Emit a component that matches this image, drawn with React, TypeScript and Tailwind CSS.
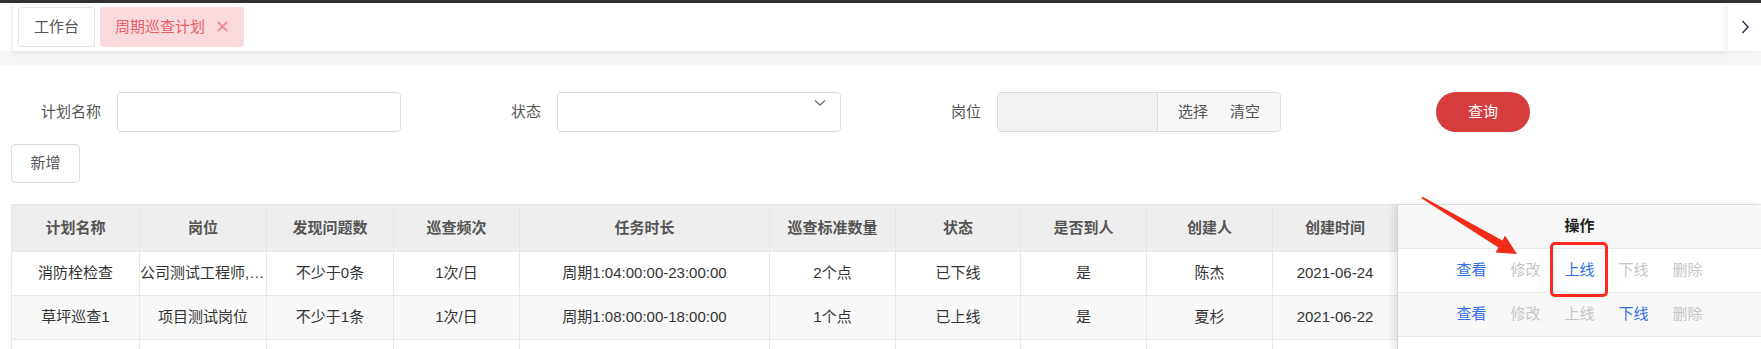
import React from 'react'

const columns = [
  { title: '计划名称', w: 'w-[128px]' },
  { title: '岗位', w: 'w-[127px]' },
  { title: '发现问题数', w: 'w-[127px]' },
  { title: '巡查频次', w: 'w-[126px]' },
  { title: '任务时长', w: 'w-[250px]' },
  { title: '巡查标准数量', w: 'w-[126px]' },
  { title: '状态', w: 'w-[125px]' },
  { title: '是否到人', w: 'w-[126px]' },
  { title: '创建人', w: 'w-[126px]' },
  { title: '创建时间', w: 'w-[125px]' },
]

const rows = [
  ['消防栓检查', '公司测试工程师,项目测试岗位', '不少于0条', '1次/日', '周期1:04:00:00-23:00:00', '2个点', '已下线', '是', '陈杰', '2021-06-24'],
  ['草坪巡查1', '项目测试岗位', '不少于1条', '1次/日', '周期1:08:00:00-18:00:00', '1个点', '已上线', '是', '夏杉', '2021-06-22'],
  ['', '', '', '', '', '', '', '', '', ''],
]

// which action links are enabled, per row
const actions = [
  [true, false, true, false, false],
  [true, false, false, true, false],
]
const actionNames = ['查看', '修改', '上线', '下线', '删除']

const rowBg = ['bg-white', 'bg-[#f8f8f8]', 'bg-white']

export default function App() {
  return (
    <div className="relative w-[1761px] h-[349px] overflow-hidden bg-white font-['Liberation_Sans','Noto_Sans_CJK_SC',sans-serif] text-[15px]">
      {/* top strip */}
      <div className="h-[3px] bg-[#333333]" />

      {/* tab bar */}
      <div className="flex h-[48px] bg-white">
        <div className="w-[13px] bg-white" />
        <div className="flex flex-1 items-center gap-[5px] pl-[5px] shadow-[0_2px_6px_rgba(0,0,0,0.07),-2px_0_4px_rgba(0,0,0,0.04)]">
          <div className="flex h-[40px] w-[77px] items-center justify-center rounded-[3px] border border-[#e4e4e4] bg-white text-[#555]">
            工作台
          </div>
          <div className="flex h-[40px] w-[144px] items-center gap-[10px] rounded-[3px] bg-[#fbdadd] pl-[15px] text-[#e85f68]">
            <span>周期巡查计划</span>
            <span className="text-[18px] leading-none text-[#ef8e94]">✕</span>
          </div>
        </div>
        <div className="flex w-[33px] items-center justify-center bg-white shadow-[-3px_0_6px_rgba(0,0,0,0.06)]">
          <svg width="10" height="16" viewBox="0 0 10 16" fill="none">
            <path d="M2.5 2l5.5 6-5.5 6" stroke="#2f3a4c" strokeWidth="1.5" />
          </svg>
        </div>
      </div>

      {/* gray band */}
      <div className="h-[14px] bg-[#f5f6f8]" />

      {/* filter row */}
      <div className="flex pt-[27px]">
        <div className="flex w-[440px] items-center">
          <label className="w-[117px] pr-[16px] text-right text-[#555]">计划名称</label>
          <div className="h-[40px] w-[284px] rounded-[4px] border border-[#dcdcdc] bg-white" />
        </div>
        <div className="flex w-[440px] items-center">
          <label className="w-[117px] pr-[16px] text-right text-[#555]">状态</label>
          <div className="relative h-[40px] w-[284px] rounded-[4px] border border-[#dcdcdc] bg-white">
            <svg className="absolute right-[14px] top-[6px]" width="12" height="8" viewBox="0 0 12 8" fill="none">
              <path d="M1 1.5l5 4.5 5-4.5" stroke="#777" strokeWidth="1.4" />
            </svg>
          </div>
        </div>
        <div className="flex w-[440px] items-center">
          <label className="w-[117px] pr-[16px] text-right text-[#555]">岗位</label>
          <div className="flex h-[40px] w-[284px] overflow-hidden rounded-[4px] border border-[#dcdcdc]">
            <div className="w-[160px] border-r border-[#dcdcdc] bg-[#f2f2f2]" />
            <div className="flex flex-1 items-center justify-center gap-[22px] bg-[#f7f7f7] text-[#555]">
              <span>选择</span>
              <span>清空</span>
            </div>
          </div>
        </div>
        <div className="flex items-center pl-[116px]">
          <button className="h-[40px] w-[94px] rounded-full bg-[#d63b3d] text-white">查询</button>
        </div>
      </div>

      {/* add button */}
      <div className="pl-[11px] pt-[12px]">
        <button className="h-[39px] w-[69px] rounded-[4px] border border-[#dcdcdc] bg-white text-[#555]">新增</button>
      </div>

      {/* table */}
      <div className="ml-[11px] mt-[21px] flex border-t border-[#e5e5e5]">
        <div className="border-l border-[#e8e8e8]">
          <div className="flex h-[47px] border-b border-[#e8e8e8] bg-[#eeeeee] pt-[1px]">
            {columns.map((c) => (
              <div
                key={c.title}
                className={`${c.w} flex items-center justify-center border-r border-[#e5e5e5] font-bold text-[#555]`}
              >
                {c.title}
              </div>
            ))}
          </div>
          {rows.map((r, i) => (
            <div key={i} className={`flex h-[44px] border-b border-[#e8e8e8] ${rowBg[i]}`}>
              {r.map((cell, j) => (
                <div
                  key={j}
                  className={`${columns[j].w} flex items-center justify-center overflow-hidden border-r border-[#e8e8e8] text-[#333]`}
                >
                  <span className="block w-full truncate text-center">{cell}</span>
                </div>
              ))}
            </div>
          ))}
        </div>

        {/* fixed action column */}
        <div className="relative z-10 flex-1 bg-white shadow-[-4px_0_8px_rgba(0,0,0,0.1)]">
          <div className="flex h-[44px] items-center justify-center border-b border-[#e8e8e8] bg-[#f8f8f8] font-bold text-[#222]">
            操作
          </div>
          {[0, 1, 2].map((i) => (
            <div key={i} className={`flex h-[44px] items-center justify-center gap-[24px] border-b border-[#e8e8e8] ${rowBg[i]}`}>
              {actions[i] &&
                actionNames.map((name, k) => (
                  <span key={name} className={actions[i][k] ? 'text-[#3370e0]' : 'text-[#c6c6c6]'}>
                    {name}
                  </span>
                ))}
            </div>
          ))}
        </div>
      </div>

      {/* annotation: red box */}
      <div className="pointer-events-none absolute left-[1550px] top-[242px] z-20 h-[55px] w-[58px] rounded-[5px] border-[3px] border-[#ff2a1f]" />

      {/* annotation: red arrow */}
      <svg className="pointer-events-none absolute left-[1410px] top-[188px] z-20" width="110" height="74" viewBox="0 0 110 74">
        <polygon
          points="11,10 13,9 92.5,52.5 95,47.5 107,66 85.5,64.5 88.5,59.5"
          fill="#f22b1b"
        />
      </svg>
    </div>
  )
}
